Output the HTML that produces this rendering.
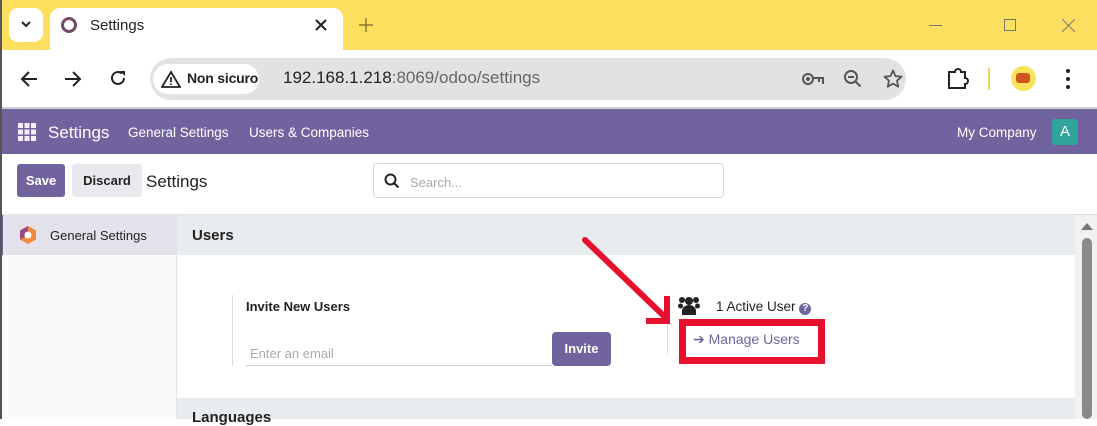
<!DOCTYPE html>
<html><head><style>
*{box-sizing:border-box;margin:0;padding:0}
body{width:1097px;height:419px;overflow:hidden;font-family:"Liberation Sans",sans-serif;background:#fff;position:relative}
.a{position:absolute}
</style></head><body>
<div class="a" style="left:0;top:0;width:1097px;height:50px;background:#fddf5f"></div>
<div class="a" style="top:8px;left:9px;width:34px;height:34px;background:#fff;border-radius:9px"></div>
<svg class="a" style="left:20px;top:19px" width="12" height="10"><path d="M2 3l4 4 4-4" stroke="#222" stroke-width="2" fill="none"/></svg>
<div class="a" style="left:50px;top:8px;width:293px;height:44px;background:#fff;border-radius:10px 10px 0 0"></div>
<div class="a" style="left:61px;top:17px;width:16px;height:16px;border:3px solid #714b67;border-radius:50%"></div>
<div class="a" style="left:90px;top:17px;font-size:15px;color:#222">Settings</div>
<svg class="a" style="left:314px;top:18px" width="14" height="14"><path d="M2 2l10 10M12 2L2 12" stroke="#222" stroke-width="2"/></svg>
<svg class="a" style="left:359px;top:18px" width="14" height="14"><path d="M7 0v14M0 7h14" stroke="#8a7a30" stroke-width="1.5"/></svg>
<div class="a" style="left:929px;top:25px;width:13px;height:1px;background:#777"></div>
<div class="a" style="left:1004px;top:19px;width:12px;height:12px;border:1px solid #777"></div>
<svg class="a" style="left:1062px;top:19px" width="13" height="13"><path d="M0 0l13 13M13 0L0 13" stroke="#777" stroke-width="1"/></svg>
<div class="a" style="left:0;top:50px;width:1097px;height:57px;background:#fff;border-radius:8px 8px 0 0"></div>
<svg class="a" style="left:20px;top:70px" width="18" height="18"><path d="M17 9H2M9 2L2 9l7 7" stroke="#222" stroke-width="2" fill="none"/></svg>
<svg class="a" style="left:64px;top:70px" width="18" height="18"><path d="M1 9h15M9 2l7 7-7 7" stroke="#222" stroke-width="2" fill="none"/></svg>
<svg class="a" style="left:109px;top:69px" width="18" height="18"><path d="M15 9a6 6 0 1 1-2-4.5" stroke="#222" stroke-width="2" fill="none"/><path d="M11 2h5v5z" fill="#222"/></svg>
<div class="a" style="left:150px;top:58px;width:756px;height:42px;background:#e2e2e2;border-radius:21px"></div>
<div class="a" style="left:153px;top:64px;width:106px;height:30px;background:#fff;border-radius:15px"></div>
<svg class="a" style="left:161px;top:70px" width="20" height="18"><path d="M10 2L19 17H1z" stroke="#222" stroke-width="1.8" fill="none"/><path d="M10 7v5M10 13.5v1.5" stroke="#222" stroke-width="1.8"/></svg>
<div class="a" style="left:187px;top:70px;font-size:14px;color:#222;font-weight:bold;letter-spacing:-0.2px">Non sicuro</div>
<div class="a" style="left:283px;top:68px;font-size:17px;color:#222">192.168.1.218<span style="color:#666">:8069/odoo/settings</span></div>
<svg class="a" style="left:801px;top:71px" width="24" height="16"><circle cx="7" cy="8" r="5" stroke="#555" stroke-width="2" fill="none"/><circle cx="7" cy="8" r="2" fill="#555"/><path d="M12 7h10v6M18 7v4" stroke="#555" stroke-width="2" fill="none"/></svg>
<svg class="a" style="left:843px;top:69px" width="20" height="20"><circle cx="8" cy="8" r="6" stroke="#555" stroke-width="2" fill="none"/><path d="M5 8h6M12.5 12.5l5 5" stroke="#555" stroke-width="2"/></svg>
<svg class="a" style="left:883px;top:69px" width="20" height="20"><path d="M10 1.5l2.5 5.6 6 .6-4.5 4 1.3 6L10 14.6 4.7 17.7 6 11.7 1.5 7.7l6-.6z" stroke="#555" stroke-width="1.8" fill="none" stroke-linejoin="round"/></svg>
<svg class="a" style="left:946px;top:67px" width="24" height="24"><path d="M3 5h6a3 3 0 0 1 6 0h4v6a3 3 0 0 1 0 6v4H3z" stroke="#222" stroke-width="2" fill="none"/></svg>
<div class="a" style="left:988px;top:68px;width:2px;height:22px;background:#f3d25c"></div>
<div class="a" style="left:1011px;top:66px;width:25px;height:25px;background:#f9e35a;border-radius:50%"></div>
<div class="a" style="left:1016px;top:73px;width:14px;height:10px;background:#d2541f;border-radius:3px"></div>
<svg class="a" style="left:1064px;top:68px" width="8" height="22" fill="#222"><circle cx="4" cy="3" r="2"/><circle cx="4" cy="11" r="2"/><circle cx="4" cy="19" r="2"/></svg>
<div class="a" style="left:0;top:107px;width:1097px;height:2px;background:#d0d0d0"></div>
<div class="a" style="left:0;top:109px;width:1097px;height:45px;background:#71639e"></div>
<svg class="a" style="left:18px;top:123px" width="18" height="18" fill="#f3eefa"><rect x="0" y="0" width="5" height="5"/><rect x="6.5" y="0" width="5" height="5"/><rect x="13" y="0" width="5" height="5"/><rect x="0" y="6.5" width="5" height="5"/><rect x="6.5" y="6.5" width="5" height="5"/><rect x="13" y="6.5" width="5" height="5"/><rect x="0" y="13" width="5" height="5"/><rect x="6.5" y="13" width="5" height="5"/><rect x="13" y="13" width="5" height="5"/></svg>
<div class="a" style="left:48px;top:123px;font-size:17px;color:#fff">Settings</div>
<div class="a" style="left:128px;top:125px;font-size:13.5px;color:#fff">General Settings</div>
<div class="a" style="left:249px;top:125px;font-size:13.5px;color:#fff">Users &amp; Companies</div>
<div class="a" style="left:957px;top:125px;font-size:13.5px;color:#fff">My Company</div>
<div class="a" style="left:1052px;top:119px;width:26px;height:26px;background:#2fa59b;border-radius:3px;color:#fff;font-size:15px;text-align:center;line-height:26px">A</div>
<div class="a" style="left:17px;top:164px;width:48px;height:33px;background:#71639e;border-radius:3px;color:#fff;font-weight:bold;font-size:13px;text-align:center;line-height:33px">Save</div>
<div class="a" style="left:72px;top:164px;width:70px;height:33px;background:#e7e9ed;border-radius:3px;color:#222;font-weight:bold;font-size:13px;text-align:center;line-height:33px">Discard</div>
<div class="a" style="left:146px;top:172px;font-size:17px;color:#222">Settings</div>
<div class="a" style="left:373px;top:163px;width:351px;height:35px;border:1px solid #d8dadd;border-radius:4px"></div>
<svg class="a" style="left:384px;top:173px" width="16" height="16"><circle cx="6.5" cy="6.5" r="5" stroke="#222" stroke-width="2" fill="none"/><path d="M10 10l4.5 4.5" stroke="#222" stroke-width="2"/></svg>
<div class="a" style="left:410px;top:175px;font-size:13px;color:#aaa">Search...</div>
<div class="a" style="left:0;top:214px;width:1097px;height:1px;background:#e2e2e2"></div>
<div class="a" style="left:0;top:215px;width:177px;height:204px;background:#f9fafb;border-right:1px solid #e5e5e5"></div>
<div class="a" style="left:0;top:215px;width:177px;height:40px;background:#e6e2ec;border-left:3px solid #71639e"></div>
<svg class="a" style="left:18px;top:225px" width="20" height="20"><polygon points="10,1 18,5.5 18,14.5 10,19 2,14.5 2,5.5" fill="#f0883e"/><polygon points="10,1 2,5.5 2,14.5 10,10" fill="#9a4a7e"/><circle cx="10" cy="10" r="3.5" fill="#fff"/></svg>
<div class="a" style="left:50px;top:228px;font-size:13px;color:#222">General Settings</div>
<div class="a" style="left:0;top:0;width:2px;height:419px;background:#555"></div>
<div class="a" style="left:177px;top:215px;width:898px;height:40px;background:#e9ecef"></div>
<div class="a" style="left:192px;top:227px;font-size:15px;font-weight:bold;color:#222">Users</div>
<div class="a" style="left:177px;top:398px;width:898px;height:21px;background:#e9ecef"></div>
<div class="a" style="left:192px;top:409px;font-size:15px;font-weight:bold;color:#222">Languages</div>
<div class="a" style="left:232px;top:295px;width:1px;height:71px;background:#ddd"></div>
<div class="a" style="left:246px;top:299px;font-size:13px;font-weight:bold;color:#222">Invite New Users</div>
<div class="a" style="left:250px;top:346px;font-size:13px;color:#aaa">Enter an email</div>
<div class="a" style="left:246px;top:365px;width:306px;height:1px;background:#ccc"></div>
<div class="a" style="left:552px;top:332px;width:59px;height:34px;background:#71639e;border-radius:4px;color:#fff;font-weight:bold;font-size:13px;text-align:center;line-height:34px">Invite</div>
<div class="a" style="left:667px;top:295px;width:1px;height:60px;background:#ddd"></div>
<svg class="a" style="left:677px;top:296px" width="24" height="20" fill="#222"><circle cx="12" cy="5" r="4"/><circle cx="5" cy="4" r="3"/><circle cx="19" cy="4" r="3"/><circle cx="3.5" cy="10" r="2.5"/><circle cx="20.5" cy="10" r="2.5"/><path d="M5 19v-4a7 6 0 0 1 14 0v4z"/></svg>
<div class="a" style="left:716px;top:299px;font-size:13.5px;color:#222">1 Active User <span style="display:inline-block;width:12px;height:12px;border-radius:50%;background:#71639e;color:#fff;font-size:10px;text-align:center;line-height:12px;font-weight:bold">?</span></div>
<div class="a" style="left:679px;top:319px;width:146px;height:45px;border:7px solid #e8112d"></div>
<div class="a" style="left:693px;top:331px;font-size:14px;color:#71639e">➔ Manage Users</div>
<svg class="a" style="left:580px;top:235px" width="100" height="95"><path d="M5 5L86 83" stroke="#e8112d" stroke-width="6" stroke-linecap="round"/><path d="M66 86h21V61" stroke="#e8112d" stroke-width="6" fill="none"/></svg>
<div class="a" style="left:1075px;top:215px;width:22px;height:204px;background:#f1f1f1"></div>
<div class="a" style="left:1082px;top:238px;width:10px;height:181px;background:#8a8a8a;border-radius:5px"></div>
<svg class="a" style="left:1080px;top:221px" width="14" height="10"><path d="M1 9L7 2l6 7z" fill="#777"/></svg>
</body></html>
